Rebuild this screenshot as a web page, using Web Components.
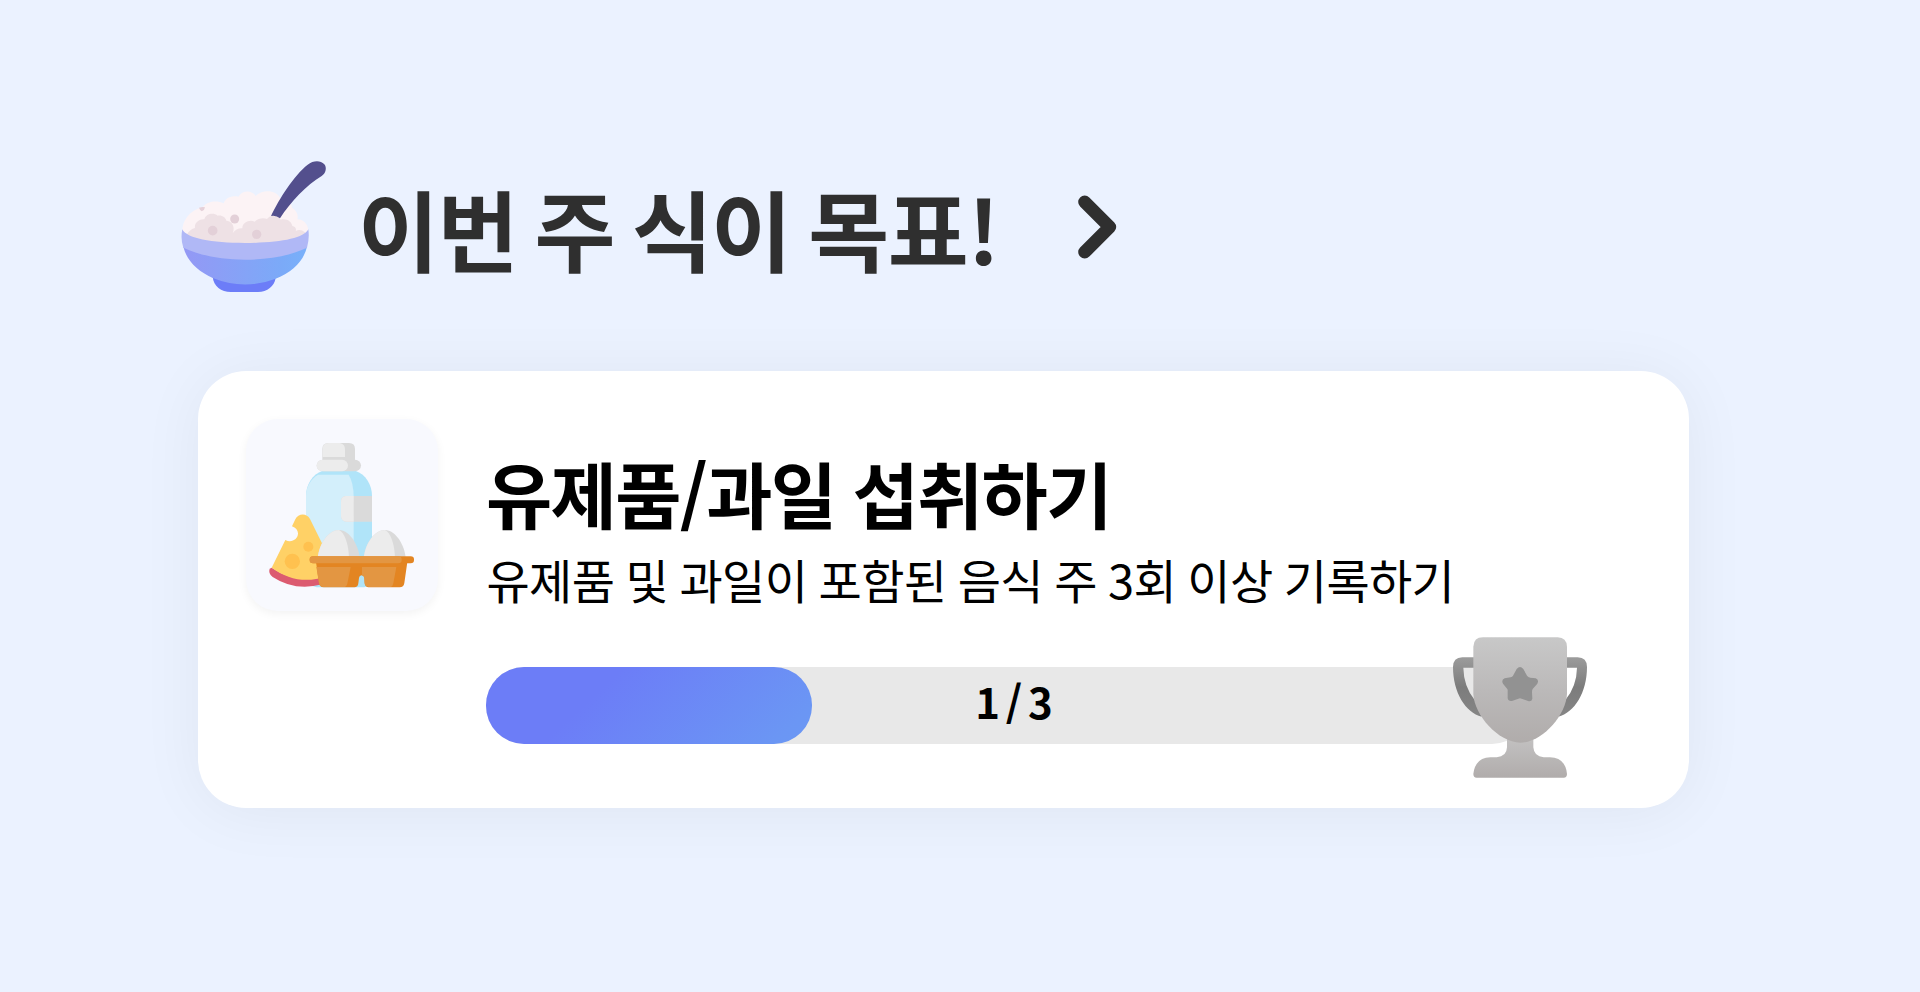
<!DOCTYPE html>
<html lang="ko">
<head>
<meta charset="utf-8">
<title>이번 주 식이 목표</title>
<style>
html,body{margin:0;padding:0;background:#ebf2ff}
body{font-family:"Noto Sans CJK KR","Noto Sans",sans-serif;overflow:hidden}
</style>
</head>
<body>
<goal-page>
  <goal-header slot="header">이번 주 식이 목표!</goal-header>
  <goal-card>
    <food-icon slot="icon"></food-icon>
    <span slot="title">유제품/과일 섭취하기</span>
    <span slot="desc">유제품 및 과일이 포함된 음식 주 3회 이상 기록하기</span>
    <goal-progress slot="progress">1 / 3</goal-progress>
  </goal-card>
</goal-page>
<script>
const define = (name, html) => customElements.define(name, class extends HTMLElement {
  constructor() {
    super();
    this.attachShadow({ mode: 'open' }).innerHTML = html;
  }
});

define('goal-page', `
<style>
:host{display:block;box-sizing:border-box;width:1920px;height:992px;padding:150px 231.5px 0 170px;background:#ebf2ff}
main{margin:71px 0 0 27.5px}
</style>
<slot name="header"></slot><main><slot></slot></main>`);

define('rice-bowl', `
<style>:host{display:block;width:170px;height:150px}svg{display:block}</style>
<svg width="170" height="150" viewBox="0 0 510 450">
  <defs>
    <linearGradient id="b" x1="40" y1="330" x2="410" y2="330" gradientUnits="userSpaceOnUse"><stop offset="0" stop-color="#9498f5"/><stop offset=".8" stop-color="#7baaf8"/><stop offset="1" stop-color="#79b0fa"/></linearGradient>
  </defs>
  <path d="M37 242C37 216 55 182 98 171C114 152 142 151 161 160C166 144 186 136 205 140C217 119 247 120 257 138C274 118 319 117 331 145C354 148 365 162 366 173C381 183 386 197 382 208C399 208 414 221 415 242C380 272 320 280 225 280C140 280 70 270 37 242Z" fill="#fcf3f5"/>
  <path d="M87 173Q98 169 105 172Q104 181 95 184Q91 183 87 173Z" fill="#e5d1d9"/>
  <path d="M50 254C56 243 66 236 75 234C72 218 89 206 103 208C108 190 131 187 143 197C157 195 167 203 169 212C187 213 196 231 188 250Q199 234 217 235C217 217 239 208 254 215C266 203 283 204 291 207C299 194 325 193 332 209C349 204 364 213 367 228C376 229 380 238 377 243Q391 236 405 247V260L340 282H100Z" fill="#eee1e5"/>
  <circle cx="194" cy="207" r="13.5" fill="#e3d0d8"/><circle cx="128" cy="242" r="14.5" fill="#e3d0d8"/><circle cx="260" cy="253" r="14" fill="#e3d0d8"/>
  <path d="M303 198C328 145 373 75 413 44C430 31 451 30 463 43C471 53 468 70 455 78C410 105 362 155 330 205Q318 195 303 198Z" fill="#534f8d"/>
  <path d="M128 381C131 409 153 426 183 426H264C292 426 313 409 317 384Q224 420 128 381Z" fill="#6c7df8"/>
  <path d="M40 290Q225 350 411 290C401 333 369 365 317 386Q223 422 128 384C83 363 50 333 40 290Z" fill="url(#b)"/>
  <path d="M37 238C49 265 125 279 225 279C329 279 401 265 415 238Q419 265 411 293C356 319 292 329 225 329C154 329 92 317 40 293Q31 266 37 238Z" fill="#b0b8f6"/>
</svg>`);

define('goal-header', `
<style>
:host{display:flex;align-items:center;height:150px;color:#2f2f2f}
h1{margin:3px 0 0 18px;width:658px;font-size:88px;line-height:130px;font-weight:700;letter-spacing:-1.5px;word-spacing:-5.5px;white-space:nowrap}
.chev{display:block;flex:none;margin:3.4px 0 0 58px}
</style>
<rice-bowl></rice-bowl><h1><slot></slot></h1>
<svg class="chev" width="46" height="70" viewBox="0 0 46 70"><path d="M10.7 10L35.7 35L10.7 60" fill="none" stroke="#2f2f2f" stroke-width="13" stroke-linecap="round" stroke-linejoin="round"/></svg>`);

define('food-icon', `
<style>:host{display:block;width:160px;height:170px}svg{display:block}</style>
<svg width="160" height="170" viewBox="0 0 480 510">
  <path d="M188 122H286C317 133 336 163 336 198V440Q336 472 305 472H170Q138 465 138 435V198C138 163 157 133 188 122Z" fill="#b0e4f9"/>
  <path d="M174 134H266Q281 158 281 202V440H138V198C138 171 152 147 174 134Z" fill="#d3effb"/>
  <path d="M336 198H258Q243 199 243 214V258Q243 274 260 275H336Z" fill="#dadada"/>
  <path d="M281 198H258Q243 199 243 214V258Q243 274 260 275H281Z" fill="#ececec"/>
  <path d="M187 92V57Q187 39 205 39H267Q285 39 285 57V92Z" fill="#dadada"/>
  <path d="M188 81V57Q188 39 206 39H239Q255 42 255 58V81Z" fill="#ececec"/>
  <rect x="170" y="89" width="133" height="35" rx="17.500" fill="#dadada"/>
  <rect x="170" y="89" width="94" height="35" rx="17.500" fill="#ececec"/>
  <path d="M35 413Q106 461 187 440V463Q105 485 38 441Q24 430 29 416Z" fill="#dc5b70"/>
  <path d="M35 413L76 330C94 340 114 328 114 310Q113 295 96 289L106 268C114 249 141 248 150 267L196 360V440C140 459 83 449 35 413Z" fill="#ffd166"/>
  <circle cx="97" cy="394" r="23" fill="#ffc14f"/><circle cx="145" cy="350" r="15" fill="#ffc14f"/>
  <path d="M173 384C178 339 206 300 237 300C270 301 296 346 299 384Z" fill="#dadada"/>
  <path d="M173 384C178 339 206 300 237 300C255 309 266 345 267 384Z" fill="#ececec"/>
  <path d="M311 384C316 339 344 300 375 300C408 301 434 346 437 384Z" fill="#dadada"/>
  <path d="M311 384C316 339 344 300 375 300C393 309 404 345 405 384Z" fill="#ececec"/>
  <path d="M168 396H442L433 459Q431 472 419 472H326Q315 471 314 460L313 444Q312 436 305 436Q298 436 297 444L295 460Q294 472 283 472H191Q178 471 177 459Z" fill="#e38522"/>
  <path d="M169 411H272L263 456Q261 469 254 471H190Q178 469 177 459Z" fill="#e39642"/>
  <path d="M306 411H409L400 460Q398 469 393 471H326Q315 470 314 460L313 444Q311 437 306 436Z" fill="#e39642"/>
  <rect x="149" y="379" width="313" height="21" rx="10" fill="#e38522"/>
  <rect x="149" y="379" width="276" height="21" rx="10" fill="#e39642"/>
</svg>`);

define('goal-card', `
<style>
:host{display:flex;box-sizing:border-box;width:1491px;height:437px;padding:47.5px 0 0 48px;border-radius:48px;background:#fff;box-shadow:0 4px 64px rgba(0,0,0,.055);color:#000}
.tile{box-sizing:border-box;flex:none;width:192px;height:192px;padding:11.5px 0 0 14.5px;border-radius:32px;background:#f8f9fe;box-shadow:0 3px 10px rgba(0,0,0,.05)}
.body{margin-left:48.5px;width:1120px}
h2{margin:23.5px 0 0;font-size:72px;line-height:100px;font-weight:700;letter-spacing:-1.65px;word-spacing:-1.5px;white-space:nowrap}
p{margin:7px 0 0 .5px;font-size:47px;line-height:60px;letter-spacing:-.65px;word-spacing:-1.2px;white-space:nowrap}
.bar{margin-top:58px}
</style>
<div class="tile"><slot name="icon"></slot></div>
<div class="body"><h2><slot name="title"></slot></h2><p><slot name="desc"></slot></p><div class="bar"><slot name="progress"></slot></div></div>`);

define('trophy-icon', `
<style>:host{display:block;width:180px;height:170px}svg{display:block}</style>
<svg width="180" height="170" viewBox="0 0 540 510">
  <defs>
    <linearGradient id="c" x1="0" y1="0" x2="0" y2="1"><stop offset="0" stop-color="#c8c8c8"/><stop offset=".5" stop-color="#bbb9b9"/><stop offset="1" stop-color="#b0acab"/></linearGradient>
    <linearGradient id="s" x1="0" y1="0" x2="0" y2="1"><stop offset="0" stop-color="#c3c2c2"/><stop offset="1" stop-color="#b0acab"/></linearGradient>
    <linearGradient id="h" x1="0" y1="112" x2="0" y2="290" gradientUnits="userSpaceOnUse"><stop offset="0" stop-color="#9c9c9c"/><stop offset=".5" stop-color="#7c7c7c"/><stop offset="1" stop-color="#858585"/></linearGradient>
  </defs>
  <path d="M140 112H97Q69 113 69 141C69 218 107 278 155 290L134 240Q101 199 100 143H140Z" fill="url(#h)"/>
  <path d="M400 112H443Q471 113 471 141C471 218 433 278 385 290L406 240Q440 199 441 143H400Z" fill="url(#h)"/>
  <path d="M231 350H310V382Q312 410 341 412H360Q407 414 411 462Q411 473 401 473H140Q130 473 130 462Q135 414 181 412H200Q230 410 231 382Z" fill="url(#s)"/>
  <path d="M130 80Q131 52 159 52H383Q410 53 411 80V222C408 286 336 368 271 368C204 366 133 286 130 222Z" fill="url(#c)"/>
  <path d="M260 147Q270 135 280 147L291 167Q294 172 301 173L317 175Q328 180 322 191L308 207Q306 210 306 217L307 236Q305 246 294 243L275 236Q270 234 265 236L246 243Q235 245 233 235V214Q234 209 230 205L219 191Q213 179 224 175L242 172Q247 171 249 167Z" fill="#929292"/>
</svg>`);

define('goal-progress', `
<style>
:host{display:block;position:relative;width:1044px;height:76.500px;border-radius:38px;background:#e8e8e8}
.fill{width:326px;height:100%;border-radius:38px;background:linear-gradient(137deg,#6c7df7 0%,#6c7df7 34%,#6b96f4 90%,#6b98f4 100%)}
.label{position:absolute;inset:0;top:-8px;left:11px;display:flex;align-items:center;justify-content:center;font-size:42px;line-height:60px;font-weight:700;letter-spacing:-1px;word-spacing:-4px;white-space:pre}
trophy-icon{position:absolute;left:944px;top:-47.3px}
</style>
<div class="fill"></div><div class="label"><slot></slot></div><trophy-icon></trophy-icon>`);
</script>
</body>
</html>
